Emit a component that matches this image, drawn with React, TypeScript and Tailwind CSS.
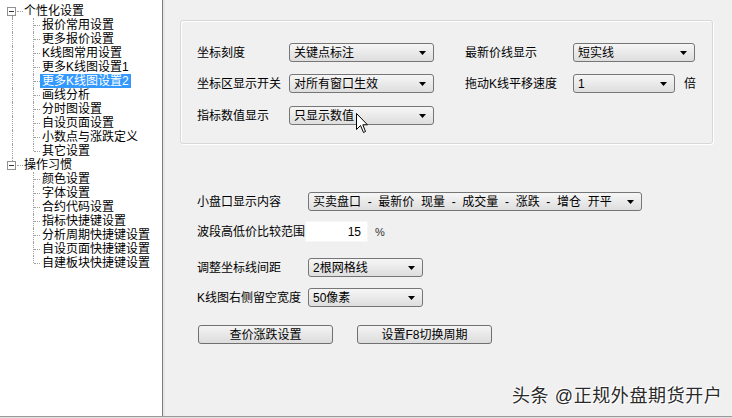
import React from "react";

const font = { fontFamily: '"Liberation Sans", "Noto Sans CJK SC", sans-serif' };

type Row = { text: string; level: 0 | 1; group: 1 | 2; last?: boolean; selected?: boolean };

const rows: Row[] = [
  { text: "个性化设置", level: 0, group: 1 },
  { text: "报价常用设置", level: 1, group: 1 },
  { text: "更多报价设置", level: 1, group: 1 },
  { text: "K线图常用设置", level: 1, group: 1 },
  { text: "更多K线图设置1", level: 1, group: 1 },
  { text: "更多K线图设置2", level: 1, group: 1, selected: true },
  { text: "画线分析", level: 1, group: 1 },
  { text: "分时图设置", level: 1, group: 1 },
  { text: "自设页面设置", level: 1, group: 1 },
  { text: "小数点与涨跌定义", level: 1, group: 1 },
  { text: "其它设置", level: 1, group: 1, last: true },
  { text: "操作习惯", level: 0, group: 2 },
  { text: "颜色设置", level: 1, group: 2 },
  { text: "字体设置", level: 1, group: 2 },
  { text: "合约代码设置", level: 1, group: 2 },
  { text: "指标快捷键设置", level: 1, group: 2 },
  { text: "分析周期快捷键设置", level: 1, group: 2 },
  { text: "自设页面快捷键设置", level: 1, group: 2 },
  { text: "自建板块快捷键设置", level: 1, group: 2, last: true },
];

function TreeRow({ r }: { r: Row }) {
  if (r.level === 0) {
    const first = r.group === 1;
    return (
      <div className="relative h-[14px] flex items-center">
        {first ? (
          <div className="absolute left-[12px] top-[12px] h-[2px] border-l border-dotted border-[#a0a0a0]" />
        ) : (
          <div className="absolute left-[12px] top-0 h-[3px] border-l border-dotted border-[#a0a0a0]" />
        )}
        <div className="absolute left-[7px] top-[3px] w-[9px] h-[9px] border border-[#919191] bg-white flex items-center justify-center">
          <div className="w-[5px] h-px bg-[#333]" />
        </div>
        <div className="absolute left-[17px] top-[7px] w-[6px] border-t border-dotted border-[#a0a0a0]" />
        <span className="ml-[23px] text-[12px] leading-[14px] px-px text-black whitespace-nowrap">{r.text}</span>
      </div>
    );
  }
  return (
    <div className="relative h-[14px] flex items-center">
      {r.group === 1 && (
        <div className="absolute left-[12px] top-0 h-[14px] border-l border-dotted border-[#a0a0a0]" />
      )}
      <div
        className={
          "absolute left-[33px] top-0 border-l border-dotted border-[#a0a0a0] " +
          (r.last ? "h-[7px]" : "h-[14px]")
        }
      />
      <div className="absolute left-[34px] top-[7px] w-[6px] border-t border-dotted border-[#a0a0a0]" />
      <span
        className={
          "ml-[40px] h-[14px] text-[12px] leading-[14px] px-[2px] whitespace-nowrap " +
          (r.selected ? "bg-[#3399ff] text-white" : "text-black")
        }
      >
        {r.text}
      </span>
    </div>
  );
}

function Select({ value, w }: { value: string; w: string }) {
  return (
    <div
      className={
        "h-[19px] border border-[#767676] rounded-[3px] bg-gradient-to-b from-[#f6f6f6] to-[#dedede] flex items-center justify-between pl-[4px] pr-[7px] shrink-0 " +
        w
      }
    >
      <span className="text-[12px] leading-[14px] text-black whitespace-pre">{value}</span>
      <svg width="7" height="4" viewBox="0 0 7 4">
        <path d="M0 0 H7 L3.5 4 Z" fill="#000" />
      </svg>
    </div>
  );
}

function Label({ text, w }: { text: string; w: string }) {
  return <span className={"text-[12px] leading-[14px] text-black whitespace-nowrap shrink-0 " + w}>{text}</span>;
}

function Button({ text }: { text: string }) {
  return (
    <div className="w-[135px] h-[19px] border border-[#707070] rounded-[3px] bg-gradient-to-b from-[#f4f4f4] to-[#dcdcdc] flex items-center justify-center text-[12px] leading-[14px] text-black">
      {text}
    </div>
  );
}

export default function App() {
  return (
    <div className="relative w-[732px] h-[418px] bg-[#f0f0f0] overflow-hidden" style={font}>
      <div className="flex h-[416px]">
        <div className="w-[163px] shrink-0 bg-white border-r border-[#7a7a7a] pt-[4px]">
          {rows.map((r, i) => (
            <TreeRow key={i} r={r} />
          ))}
        </div>
        <div className="flex-1 border-l-2 border-[#e6e6e6] pl-[15px] pt-[20px]">
          <div className="w-[533px] h-[124px] border border-[#d8d8d8] rounded-[3px] shadow-[inset_1px_1px_0_#ffffff,1px_1px_0_#ffffff] pl-[16px] pt-[22px]">
            <div className="flex items-center h-[19px]">
              <Label text="坐标刻度" w="w-[92px]" />
              <Select value="关键点标注" w="w-[145px]" />
              <Label text="最新价线显示" w="w-[108px] ml-[31px]" />
              <Select value="短实线" w="w-[122px]" />
            </div>
            <div className="flex items-center h-[19px] mt-[12px]">
              <Label text="坐标区显示开关" w="w-[92px]" />
              <Select value="对所有窗口生效" w="w-[145px]" />
              <Label text="拖动K线平移速度" w="w-[108px] ml-[31px]" />
              <Select value="1" w="w-[102px]" />
              <span className="ml-[9px] text-[12px] leading-[14px] text-black">倍</span>
            </div>
            <div className="flex items-center h-[19px] mt-[13px]">
              <Label text="指标数值显示" w="w-[92px]" />
              <Select value="只显示数值" w="w-[145px]" />
            </div>
          </div>

          <div className="pl-[17px] mt-[48px]">
            <div className="flex items-center h-[19px]">
              <Label text="小盘口显示内容" w="w-[111px]" />
              <Select value="买卖盘口  -  最新价  现量  -  成交量  -  涨跌  -  增仓  开平" w="w-[334px]" />
            </div>
            <div className="flex items-center h-[21px] mt-[10px]">
              <Label text="波段高低价比较范围" w="w-[108px]" />
              <div className="w-[63px] h-[21px] bg-white border border-[#f6f6f6] flex items-center justify-end pr-[6px] text-[12px] leading-[14px] text-black">
                15
              </div>
              <span className="ml-[7px] text-[11px] leading-[14px] text-[#333]">%</span>
            </div>
            <div className="flex items-center h-[19px] mt-[16px]">
              <Label text="调整坐标线间距" w="w-[111px]" />
              <Select value="2根网格线" w="w-[115px]" />
            </div>
            <div className="flex items-center h-[19px] mt-[11px]">
              <Label text="K线图右侧留空宽度" w="w-[111px]" />
              <Select value="50像素" w="w-[115px]" />
            </div>
            <div className="flex items-center gap-[24px] mt-[18px] ml-[1px]">
              <Button text="查价涨跌设置" />
              <Button text="设置F8切换周期" />
            </div>
          </div>
        </div>
      </div>
      <div className="h-px bg-[#9a9a9a]" />
      <div className="h-px bg-[#e0e0e0]" />

      <svg className="absolute left-[356px] top-[113px]" width="13" height="21" viewBox="0 0 13 21">
        <path d="M0.5 0.5 L0.5 16.5 L4.5 12.5 L7.5 19.5 L9.5 18.5 L6.8 11.8 L11.5 11.8 Z" fill="#fff" stroke="#000" strokeWidth="1" />
      </svg>

      <div
        className="absolute left-[512px] top-[385px] text-[18px] leading-[22px] tracking-[0.6px] text-[#2a2a2a] whitespace-nowrap"
        style={{ textShadow: "1px 1px 0 #fff, -1px -1px 0 #fff" }}
      >
        头条 @正规外盘期货开户
      </div>
    </div>
  );
}
